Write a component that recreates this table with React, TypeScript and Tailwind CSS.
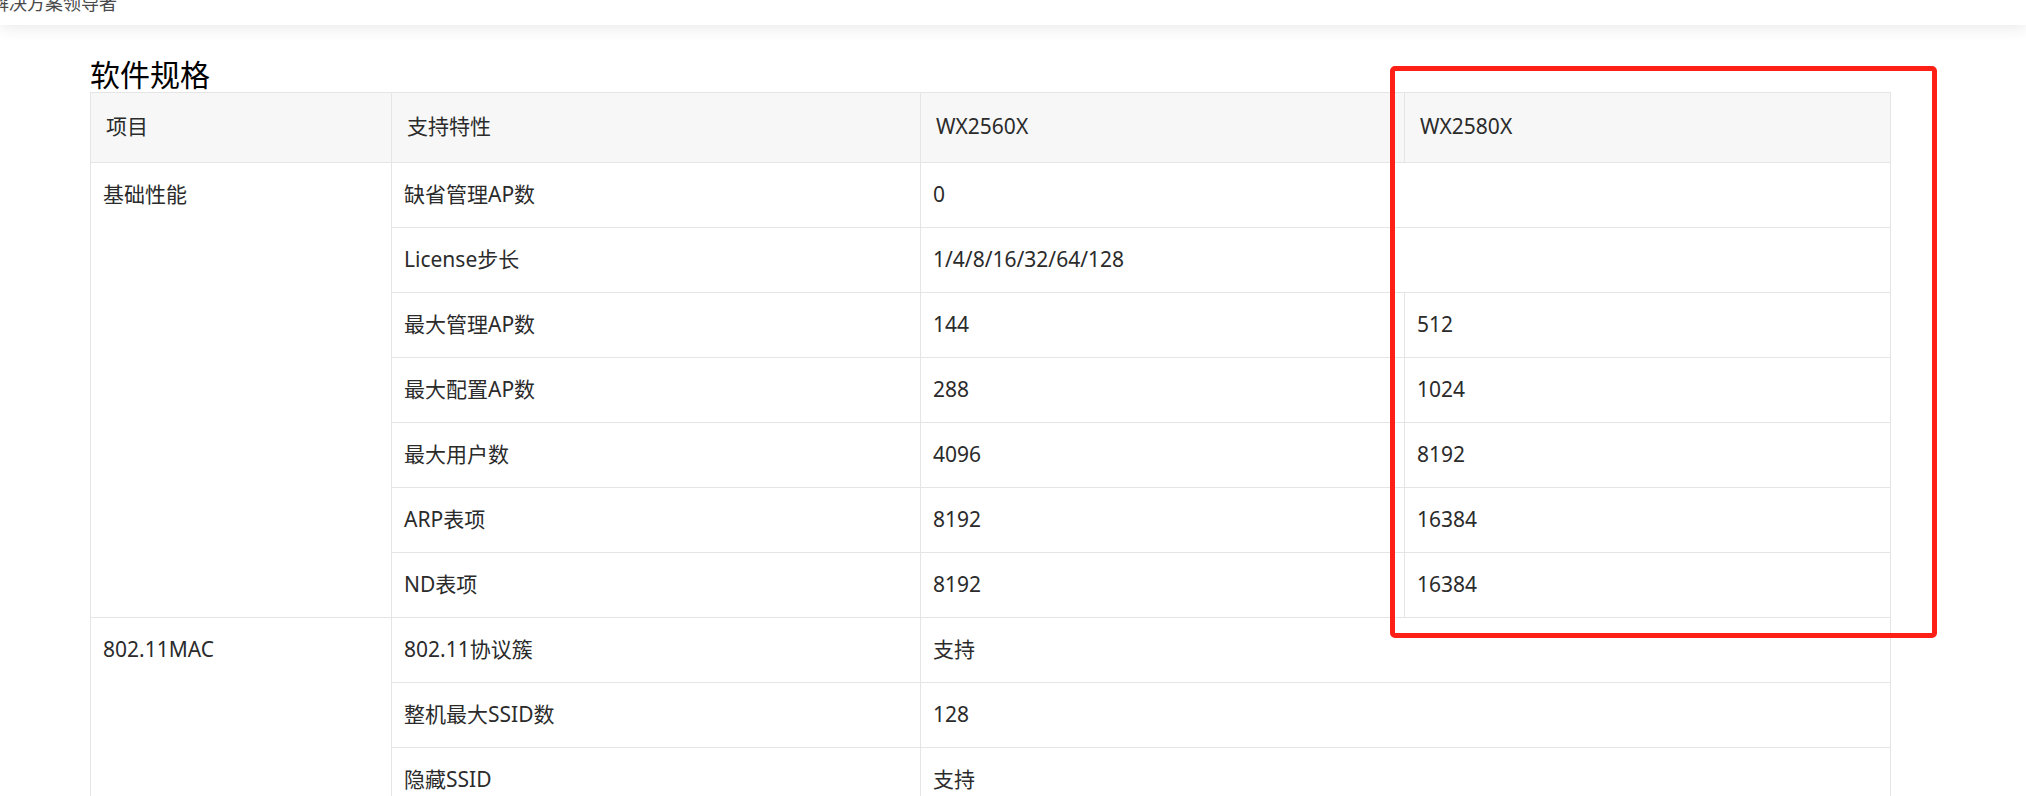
import React from "react";

type Row = {
  group?: { label: string; span: number };
  feature: string;
  a: string;
  b?: string;
  merged?: boolean;
};

const rows: Row[] = [
  { group: { label: "基础性能", span: 7 }, feature: "缺省管理AP数", a: "0", merged: true },
  { feature: "License步长", a: "1/4/8/16/32/64/128", merged: true },
  { feature: "最大管理AP数", a: "144", b: "512" },
  { feature: "最大配置AP数", a: "288", b: "1024" },
  { feature: "最大用户数", a: "4096", b: "8192" },
  { feature: "ARP表项", a: "8192", b: "16384" },
  { feature: "ND表项", a: "8192", b: "16384" },
  { group: { label: "802.11MAC", span: 5 }, feature: "802.11协议簇", a: "支持", merged: true },
  { feature: "整机最大SSID数", a: "128", merged: true },
  { feature: "隐藏SSID", a: "支持", merged: true },
  { feature: "SSID绑定VLAN", a: "支持", merged: true },
  { feature: "用户隔离", a: "支持", merged: true },
];

const cell =
  "border border-[#e5e5e5] align-top pl-[12px] pr-[12px] pt-[16px] pb-[18px] leading-[30px]";
const head =
  "border border-[#e5e5e5] pl-[15px] pr-[12px] pt-[18px] pb-[21px] text-left align-top font-normal leading-[30px]";

export default function App() {
  return (
    <div
      className="relative h-[796px] w-[2026px] overflow-hidden bg-white text-[#2b2b2b]"
      style={{ fontFamily: '"Noto Sans", "Noto Sans CJK SC", sans-serif' }}
    >
      {/* top nav, scrolled mostly out of view */}
      <div className="relative z-10 h-[25px] overflow-hidden bg-white shadow-[0_3px_16px_rgba(0,0,0,0.09)]">
        <div className="-ml-[9px] -mt-[10px] text-[18px] leading-[26px] text-[#4a4a4a]">
          解决方案领导者
        </div>
      </div>

      <div className="ml-[90px] mt-[32px] w-[1800px]">
        <h2 className="text-[30px] leading-[35px] text-black">软件规格</h2>
        <table className="w-[1800px] table-fixed border-collapse text-[21px]">
          <colgroup>
            <col className="w-[301px]" />
            <col className="w-[529px]" />
            <col className="w-[484px]" />
            <col className="w-[486px]" />
          </colgroup>
          <thead>
            <tr className="bg-[#f7f7f7]">
              <th className={head}>项目</th>
              <th className={head}>支持特性</th>
              <th className={head}>WX2560X</th>
              <th className={head}>WX2580X</th>
            </tr>
          </thead>
          <tbody>
            {rows.map((r, i) => (
              <tr key={i}>
                {r.group && (
                  <td rowSpan={r.group.span} className={cell}>
                    {r.group.label}
                  </td>
                )}
                <td className={cell}>{r.feature}</td>
                {r.merged ? (
                  <td colSpan={2} className={cell}>
                    {r.a}
                  </td>
                ) : (
                  <>
                    <td className={cell}>{r.a}</td>
                    <td className={cell}>{r.b}</td>
                  </>
                )}
              </tr>
            ))}
          </tbody>
        </table>
      </div>

      {/* highlight box drawn over the WX2580X column */}
      <div className="pointer-events-none absolute left-[1390px] top-[66px] h-[572px] w-[547px] rounded-[5px] border-[5px] border-[#fe1f17]" />
    </div>
  );
}
